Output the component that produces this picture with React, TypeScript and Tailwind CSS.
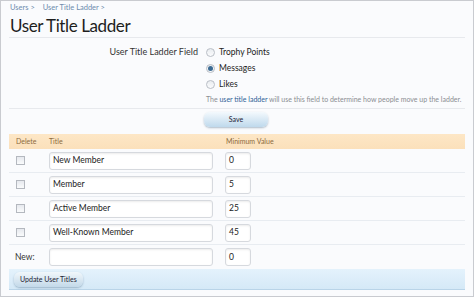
import { Fragment } from "react"

const rows = [
  { title: "New Member", min: "0" },
  { title: "Member", min: "5" },
  { title: "Active Member", min: "25" },
  { title: "Well-Known Member", min: "45" },
]

const font = { fontFamily: "Lato, 'Noto Sans', sans-serif" }

function Radio({ checked }: { checked?: boolean }) {
  return (
    <span className="flex h-[9px] w-[9px] items-center justify-center rounded-full border border-[#b9bec6] bg-gradient-to-b from-[#e9ecf0] to-[#fbfcfd]">
      {checked && <span className="h-[5px] w-[5px] rounded-full bg-[#3b6b94]" />}
    </span>
  )
}

function Checkbox() {
  return <span className="block h-[9px] w-[9px] border border-[#b4b8bf] bg-gradient-to-b from-[#e6e9ee] to-[#fafbfc]" />
}

function TextBox({ value, wide }: { value: string; wide?: boolean }) {
  return (
    <div
      className={`flex h-[18px] items-center rounded-[3px] border border-[#d6d9de] bg-white px-[3px] text-[8.5px] text-[#222] shadow-[inset_0_1px_2px_rgba(0,0,0,0.08)] ${
        wide ? "w-[164px]" : "w-[26px]"
      }`}
    >
      {value}
    </div>
  )
}

export default function App() {
  return (
    <div style={font} className="h-[297px] w-[474px] border border-[#c9cbd0] bg-[#fafbfd] px-[8px]">
      {/* Breadcrumb */}
      <div className="flex gap-[8px] pt-[1px] pl-[1px] text-[7.5px] leading-[12px] text-[#6d8bad]">
        <span>Users &gt;</span>
        <span>User Title Ladder &gt;</span>
      </div>
      <h1 className="border-b border-[#e7e9ed] pl-[1px] text-[17px] leading-[23px] tracking-[-0.4px] text-[#1e1e1e]">
        User Title Ladder
      </h1>

      {/* Field options */}
      <div className="flex border-b border-[#e7e9ed] pt-[6px] pb-[3px]">
        <div className="w-[189px] text-right text-[9px] leading-[16px] text-[#333]">
          User Title Ladder Field
        </div>
        <div className="flex flex-col pl-[8px]">
          {["Trophy Points", "Messages", "Likes"].map((l) => (
            <div key={l} className="flex h-[16px] items-center gap-[4px] text-[8.5px] text-[#222]">
              <Radio checked={l === "Messages"} />
              {l}
            </div>
          ))}
          <div className="mt-[1px] text-[7px] leading-[12px] text-[#8a8d92]">
            The <span className="text-[#2e6196]">user title ladder</span> will use this field to determine how people
            move up the ladder.
          </div>
        </div>
      </div>

      <div className="flex justify-center pt-[3px] pb-[7px]">
        <button className="ml-[-2px] h-[15px] w-[64px] rounded-[6px] bg-gradient-to-b from-[#f3f9fd] to-[#bfd9ec] text-[7px] text-[#223] shadow-[0_1px_2px_rgba(80,110,140,0.45)]">
          Save
        </button>
      </div>

      {/* Table */}
      <div className="grid grid-cols-[40px_176px_1fr] text-[9px]">
        <div className="col-span-3 grid h-[15px] grid-cols-subgrid items-center bg-gradient-to-b from-[#fde7c6] to-[#fbe0bb] text-[7px] text-[#8c6a3e]">
          <div className="pl-[7px]">Delete</div>
          <div>Title</div>
          <div className="pl-[1px]">Minimum Value</div>
        </div>
        {rows.map((r) => (
          <div key={r.title} className="col-span-3 grid h-[24px] grid-cols-subgrid items-center border-b border-[#e8ecf1]">
            <div className="pl-[7px]">
              <Checkbox />
            </div>
            <TextBox value={r.title} wide />
            <TextBox value={r.min} />
          </div>
        ))}
        <Fragment>
          <div className="col-span-3 grid h-[24px] grid-cols-subgrid items-center">
            <div className="pl-[6px] text-[8.5px] text-[#333]">New:</div>
            <TextBox value="" wide />
            <TextBox value="0" />
          </div>
        </Fragment>
        <div className="col-span-3 flex h-[21px] items-center border-b border-[#b9d4e8] bg-gradient-to-b from-[#e4f2fc] to-[#d5e9f7] pl-[5px]">
          <button className="h-[15px] rounded-[6px] bg-gradient-to-b from-[#f1f7fb] to-[#c3d9e9] px-[6px] text-[7px] text-[#223] shadow-[0_1px_2px_rgba(80,110,140,0.45)]">
            Update User Titles
          </button>
        </div>
      </div>
    </div>
  )
}
